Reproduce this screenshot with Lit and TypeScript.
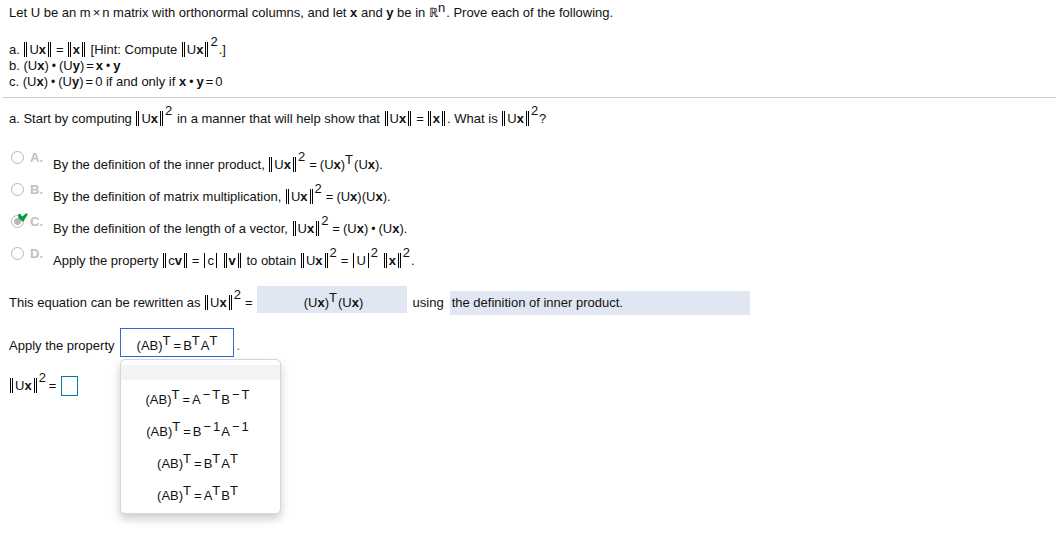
import { LitElement, html, css, TemplateResult } from "lit";
import { customElement, property, state } from "lit/decorators.js";

const T = html`<sup>T</sup>`;
const eq = html`<span class="eq">=</span>`;
const wideEq = html`<span class="weq">=</span>`;
const dot = html`<span class="dot">•</span>`;
const X = html`<b>x</b>`;
const Y = html`<b>y</b>`;
const norm = (inner: unknown) => html`<span class="norm">${inner}</span>`;
const abs = (inner: unknown) => html`<span class="abs">${inner}</span>`;
const normUx = norm(html`U${X}`);
const normUxSq = html`${normUx}<sup class="sq">2</sup>`;
const Ux = html`(U${X})`;
const Uy = html`(U${Y})`;
const math = (inner: unknown) => html`<span class="math">${inner}</span>`;

const mathStyles = css`
  * { box-sizing: border-box; }
  .math { white-space: nowrap; }
  sup {
    font-size: 13px;
    line-height: 0;
    vertical-align: 5px;
    margin-right: 1px;
  }
  sup.sq { vertical-align: 8px; }
  .norm, .abs {
    display: inline-block;
    height: 15px;
    line-height: 15px;
    padding: 0 2px;
    margin: 0 2px;
    border: solid #000;
    border-width: 0 1px;
  }
  .norm { border-style: double; border-width: 0 3px; margin-left: 1px; }
  .eq { margin: 0 2px; }
  .weq { margin: 0 3px; }
  .dot { margin: 0 3px; font-size: 12px; }
  .times { margin: 0 2px; }
  .neg { margin: 0 2px; }
`;

const properties: TemplateResult[] = [
  html``,
  html`(AB)${T}${eq}A<sup><span class="neg">−</span>T</sup>B<sup><span class="neg">−</span>T</sup>`,
  html`(AB)${T}${eq}B<sup><span class="neg">−</span>1</sup>A<sup><span class="neg">−</span>1</sup>`,
  html`(AB)${T}${eq}B${T}A${T}`,
  html`(AB)${T}${eq}A${T}B${T}`,
];

@customElement("property-picker")
class PropertyPicker extends LitElement {
  @property({ type: Number }) selected = 3;
  @property({ type: Boolean }) open = false;
  @state() private active = 0;

  static styles = [
    mathStyles,
    css`
      :host { display: inline-block; position: relative; }
      button {
        font: inherit;
        color: inherit;
        background: none;
        border: 0;
        padding: 0;
        display: block;
        text-align: center;
      }
      .field {
        min-width: 114px;
        height: 29px;
        padding: 6px 12px 0 14px;
        background: #fff;
        border: 1px solid #2f6bd0;
      }
      .menu {
        position: absolute;
        top: 100%;
        left: 0;
        z-index: 1;
        width: 161px;
        margin-top: 2px;
        padding: 5px 0;
        background: #fff;
        border: 1px solid #d6d6d6;
        border-radius: 5px;
        box-shadow: 0 5px 10px rgba(0, 0, 0, 0.2);
      }
      .option { width: 100%; height: 32px; padding: 7px 4px 0 0; }
      .option.blank { height: 15px; padding: 0; }
      .option.active { background: #f3f3f3; }
    `,
  ];

  private choose(i: number) {
    this.selected = i;
    this.open = false;
  }

  render() {
    return html`
      <button class="field" aria-haspopup="listbox" aria-expanded=${this.open} aria-label="Property"
        @click=${() => (this.open = !this.open)}>${math(properties[this.selected])}</button>
      ${this.open
        ? html`<div class="menu" role="listbox">
            ${properties.map(
              (p, i) => html`<button role="option" aria-selected=${i === this.selected}
                class="option ${i === 0 ? "blank" : ""} ${i === this.active ? "active" : ""}"
                @mouseenter=${() => (this.active = i)} @click=${() => this.choose(i)}>${math(p)}</button>`
            )}
          </div>`
        : null}
    `;
  }
}

@customElement("app-root")
class AppRoot extends LitElement {
  static styles = [
    mathStyles,
    css`
      :host {
        display: block;
        min-height: 100vh;
        font: 13px/16px "Liberation Sans", Arial, sans-serif;
        color: #111;
        background: #fff;
      }
      p { margin: 0; }
      .problem { padding: 5px 9px 7px; }
      .parts { margin-top: 21px; }
      hr { margin: 0 0 0 3px; border: 0; border-top: 1px solid #c9c9d1; }
      .work { padding: 13px 9px; }
      fieldset { margin: 22px 0 0; padding: 0; border: 0; }
      .choice { display: flex; align-items: flex-start; height: 32px; padding-left: 2px; }
      .choice input {
        appearance: none;
        width: 13px;
        height: 13px;
        margin: 2px 0 0;
        border: 1px solid #b8b8b8;
        border-radius: 50%;
        background: #fff;
      }
      .choice input:checked { background: radial-gradient(circle, #b8b8b8 3px, #fff 4px); }
      .mark { position: relative; width: 19px; }
      .mark svg { position: absolute; left: 7px; top: 0; }
      .letter { width: 23px; padding-top: 1px; font-weight: bold; color: #c0c0c0; }
      .statement { padding-top: 8px; }
      .row { display: flex; align-items: baseline; }
      .rewrite { margin-top: 9px; }
      .answer { background: #e1e7f2; }
      .formula { width: 150px; height: 27px; padding: 9px 0 0 4px; margin: 0 6px 0 1px; text-align: center; }
      .reason { width: 300px; height: 24px; padding: 4px 2px; margin-left: 6px; }
      .apply { margin-top: 13px; }
      .apply property-picker { margin: 0 3px 0 5px; }
      .final { margin-top: 19px; align-items: flex-start; }
      .final .math { padding-top: 2px; }
      .blank { width: 17px; height: 20px; padding: 0; margin-left: 3px; border: 1px solid #007fa3; font: inherit; }
      .soft { color: #666; }
    `,
  ];

  private choices = [
    html`By the definition of the inner product, ${math(html`${normUxSq}${wideEq}${Ux}${T}${Ux}.`)}`,
    html`By the definition of matrix multiplication, ${math(html`${normUxSq}${wideEq}${Ux}${Ux}.`)}`,
    html`By the definition of the length of a vector, ${math(html`${normUxSq}${wideEq}${Ux}${dot}${Ux}.`)}`,
    html`Apply the property ${math(html`${norm(html`c<b>v</b>`)}${wideEq}${abs("c")} ${norm(html`<b>v</b>`)}`)} to obtain
      ${math(html`${normUxSq}${wideEq}${abs("U")}<sup class="sq">2</sup> ${norm(X)}<sup class="sq">2</sup>.`)}`,
  ];

  render() {
    return html`
      <section class="problem">
        <p>Let U be an ${math(html`m<span class="times">×</span>n`)} matrix with orthonormal columns, and let ${X} and ${Y} be in ${math(html`ℝ<sup>n</sup>.`)} Prove each of the following.</p>
        <div class="parts">
          <p>a. ${normUx}${wideEq}${norm(X)} [Hint: Compute ${math(html`${normUxSq}.]`)}</p>
          <p>b. ${math(html`${Ux}${dot}${Uy}${eq}${X}${dot}${Y}`)}</p>
          <p>c. ${math(html`${Ux}${dot}${Uy}${eq}0`)} if and only if ${math(html`${X}${dot}${Y}${eq}0`)}</p>
        </div>
      </section>
      <hr />
      <section class="work">
        <p>a. Start by computing ${normUxSq} in a manner that will help show that ${math(html`${normUx}${wideEq}${norm(X)}.`)} What is ${math(html`${normUxSq}?`)}</p>
        <fieldset aria-label="Answer choices">
          ${this.choices.map(
            (c, i) => html`<label class="choice">
              <span class="mark">
                <input type="radio" name="choice" disabled ?checked=${i === 2} />
                ${i === 2
                  ? html`<svg width="10" height="9" viewBox="0 0 10 9" aria-label="Correct"><path d="M0 1.2L2 .8L4.4 3.4L8 .2L9.9 1.2L5.4 8.5H4.4L.4 5Z" fill="#0a9b3c" /></svg>`
                  : null}
              </span>
              <span class="letter">${"ABCD"[i]}.</span>
              <span class="statement">${c}</span>
            </label>`
          )}
        </fieldset>
        <div class="row rewrite">
          <span>This equation can be rewritten as ${math(html`${normUxSq}${wideEq}`)}</span>
          <span class="answer formula">${math(html`${Ux}${T}${Ux}`)}</span>
          <span>using</span>
          <span class="answer reason">the definition of inner product.</span>
        </div>
        <div class="row apply">
          <span>Apply the property</span>
          <property-picker open .selected=${3}></property-picker>
          <span class="soft">.</span>
        </div>
        <div class="row final">
          <label class="math" for="result">${normUxSq}${eq}</label>
          <input class="blank" id="result" type="text" />
        </div>
      </section>
    `;
  }
}
